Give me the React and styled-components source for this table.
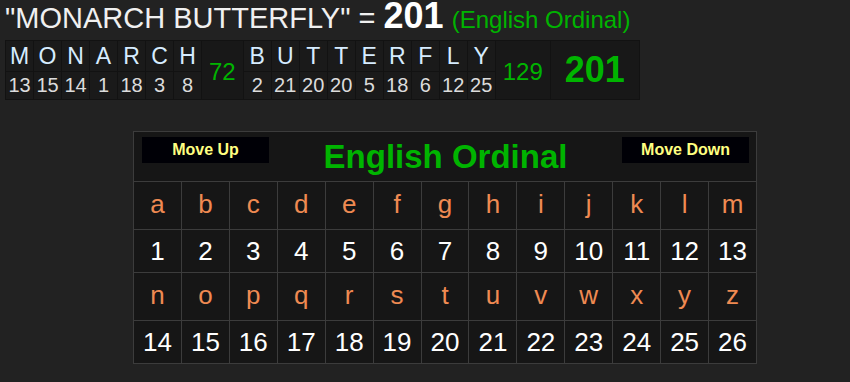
import styled, { createGlobalStyle } from "styled-components";

// data --------------------------------------------------
const words = [
  { letters: "MONARCH", total: 72 },
  { letters: "BUTTERFLY", total: 129 },
];
const ordinal = (ch) => ch.toLowerCase().charCodeAt(0) - 96;
const alphabet = "abcdefghijklmnopqrstuvwxyz".split("");

// components --------------------------------------------
const GlobalStyle = createGlobalStyle`
  body {
    margin: 0;
    background-color: #222222;
    font-family: "Liberation Sans", Arial, sans-serif;
  }
`;
const Page = styled.div`
  padding: 0 5px;
`;
const Heading = styled.div`
  height: 39px;
  padding-top: 1px;
  font-size: 29px;
  line-height: 30px;
  color: #f0f0f0;
  white-space: nowrap;
`;
const HeadTotal = styled.span`
  display: inline-block;
  line-height: 30px;
  font-size: 36px;
  font-weight: bold;
  color: #ffffff;
`;
const HeadCipher = styled.span`
  font-size: 24px;
  color: #00b400;
`;
const Breakdown = styled.div`
  display: flex;
  width: fit-content;
  gap: 1px;
  padding: 1px;
  background-color: #121212;
`;
const LetterCol = styled.div`
  display: flex;
  flex-direction: column;
  gap: 1px;
  width: 27px;
`;
const Cell = styled.div`
  display: flex;
  align-items: center;
  justify-content: center;
  background-color: #1a1a1a;
`;
const LetterCell = styled(Cell)`
  height: 30px;
  font-size: 23px;
  color: #d6ecff;
`;
const NumCell = styled(Cell)`
  height: 27px;
  font-size: 20px;
  color: #dcdcdc;
`;
const TotalCell = styled(Cell)`
  padding: ${(p) => (p.$grand ? "0 14px" : "4px 7px 0")};
  font-size: ${(p) => (p.$grand ? "36px" : "24px")};
  font-weight: ${(p) => (p.$grand ? "bold" : "normal")};
  color: #00b400;
  background-color: #181818;
`;
const Panel = styled.div`
  width: 624px;
  box-sizing: border-box;
  margin: 31px 0 0 128px;
  border: 1px solid #3c3c3c;
  background-color: #161616;
`;
const PanelHeader = styled.div`
  height: 49px;
  box-sizing: border-box;
  display: grid;
  grid-template-columns: 1fr auto 1fr;
  padding: 5px 7px 0 8px;
`;
const MoveButton = styled.button`
  justify-self: ${(p) => (p.$right ? "end" : "start")};
  width: 127px;
  height: 26px;
  border: none;
  padding: 0;
  background-color: #000006;
  color: #ffff80;
  font-family: "Liberation Sans", Arial, sans-serif;
  font-size: 16px;
  font-weight: bold;
`;
const CipherTitle = styled.div`
  font-size: 33px;
  font-weight: bold;
  color: #00b400;
  line-height: 36px;
  margin-top: 2px;
`;
const LetterGrid = styled.div`
  display: grid;
  grid-template-columns: repeat(13, 1fr);
  gap: 1px;
  border-top: 1px solid #3c3c3c;
  background-color: #3c3c3c;
`;
const GridCell = styled.div`
  height: ${(p) => (p.$letter ? "47px" : "42px")};
  display: flex;
  align-items: center;
  justify-content: center;
  padding-bottom: ${(p) => (p.$letter ? "2px" : "0")};
  box-sizing: border-box;
  background-color: #161616;
  font-size: 26px;
  color: ${(p) => (p.$letter ? "#ef8a52" : "#ffffff")};
`;

// function ----------------------------------------------
function App() {
  const grand = words.reduce((s, w) => s + w.total, 0);
  const rows = [alphabet.slice(0, 13), alphabet.slice(13)];
  return (
    <Page>
      <GlobalStyle />
      <Heading>
        "MONARCH BUTTERFLY" = <HeadTotal>{grand}</HeadTotal>{" "}
        <HeadCipher>(English Ordinal)</HeadCipher>
      </Heading>
      <Breakdown>
        {words.map((w) => (
          <>
            {w.letters.split("").map((ch, i) => (
              <LetterCol key={w.letters + i}>
                <LetterCell>{ch}</LetterCell>
                <NumCell>{ordinal(ch)}</NumCell>
              </LetterCol>
            ))}
            <TotalCell key={w.letters}>{w.total}</TotalCell>
          </>
        ))}
        <TotalCell $grand>{grand}</TotalCell>
      </Breakdown>
      <Panel>
        <PanelHeader>
          <MoveButton>Move Up</MoveButton>
          <CipherTitle>English Ordinal</CipherTitle>
          <MoveButton $right>Move Down</MoveButton>
        </PanelHeader>
        <LetterGrid>
          {rows.map((row) => (
            <>
              {row.map((ch) => (
                <GridCell key={ch} $letter>
                  {ch}
                </GridCell>
              ))}
              {row.map((ch) => (
                <GridCell key={ch + "n"}>{ordinal(ch)}</GridCell>
              ))}
            </>
          ))}
        </LetterGrid>
      </Panel>
    </Page>
  );
}

export default App;
